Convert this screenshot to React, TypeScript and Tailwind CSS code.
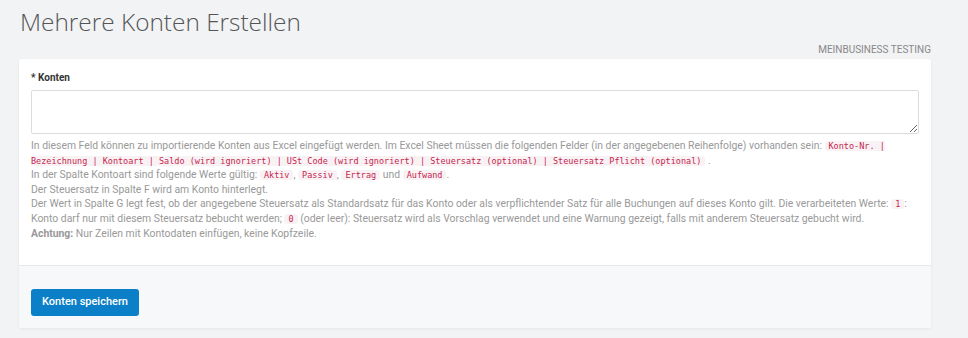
import React from 'react'

const sans = { fontFamily: 'Roboto, "Liberation Sans", sans-serif' }

function Code({ children }: { children: React.ReactNode }) {
  return (
    <code className="rounded-[3px] bg-[#f9f2f4] px-[4px] py-0 font-['DejaVu_Sans_Mono',monospace] text-[8.5px] leading-[11px] text-[#c7254e]">
      {children}
    </code>
  )
}

export default function App() {
  return (
    <div
      className="min-h-[338px] bg-[#f2f3f5] pl-[19px] pr-[37px] pt-[6px] font-['Roboto','Liberation_Sans',sans-serif]"
      style={sans}
    >
      <h1 className="pl-px font-['Open_Sans',sans-serif] text-[24.4px] font-light leading-[32px] text-[#555]">
        Mehrere Konten Erstellen
      </h1>
      <div className="mt-[5px] text-right text-[10px] uppercase leading-[14px] text-[#888]">
        MEINBUSINESS TESTING
      </div>
      <div className="mt-[2px] overflow-hidden rounded-[3px] bg-white shadow-[0_1px_3px_rgba(0,0,0,0.06)]">
        <div className="px-[12px] pb-[24px] pt-[12px]">
          <label className="block text-[10px] font-bold leading-[14px] text-[#333]">* Konten</label>
          <textarea className="mt-[5px] block h-[44px] w-[888px] resize-y rounded-[2px] border border-[#dcdcdc] bg-white" />
          <div className="mt-[5px] text-[10.4px] leading-[14.6px] text-[#999]">
            In diesem Feld können zu importierende Konten aus Excel eingefügt werden. Im Excel Sheet müssen die
            folgenden Felder (in der angegebenen Reihenfolge) vorhanden sein:{' '}
            <Code>
              Konto-Nr. | Bezeichnung | Kontoart | Saldo (wird ignoriert) | USt Code (wird ignoriert) | Steuersatz
              (optional) | Steuersatz Pflicht (optional)
            </Code>{' '}
            .
            <br />
            In der Spalte Kontoart sind folgende Werte gültig: <Code>Aktiv</Code>, <Code>Passiv</Code>,{' '}
            <Code>Ertrag</Code> und <Code>Aufwand</Code>.
            <br />
            Der Steuersatz in Spalte F wird am Konto hinterlegt.
            <br />
            Der Wert in Spalte G legt fest, ob der angegebene Steuersatz als Standardsatz für das Konto oder als
            verpflichtender Satz für alle Buchungen auf dieses Konto gilt. Die verarbeiteten Werte: <Code>1</Code>:
            Konto darf nur mit diesem Steuersatz bebucht werden; <Code>0</Code> (oder leer): Steuersatz wird als
            Vorschlag verwendet und eine Warnung gezeigt, falls mit anderem Steuersatz gebucht wird.
            <br />
            <b className="font-bold">Achtung:</b> Nur Zeilen mit Kontodaten einfügen, keine Kopfzeile.
          </div>
        </div>
        <div className="border-t border-[#e6e8eb] bg-[#f7f8fa] px-[12px] pb-[12px] pt-[22px]">
          <button className="h-[27px] w-[108px] rounded-[3px] bg-[#0b7fc7] text-[11px] font-medium text-white">
            Konten speichern
          </button>
        </div>
      </div>
    </div>
  )
}
